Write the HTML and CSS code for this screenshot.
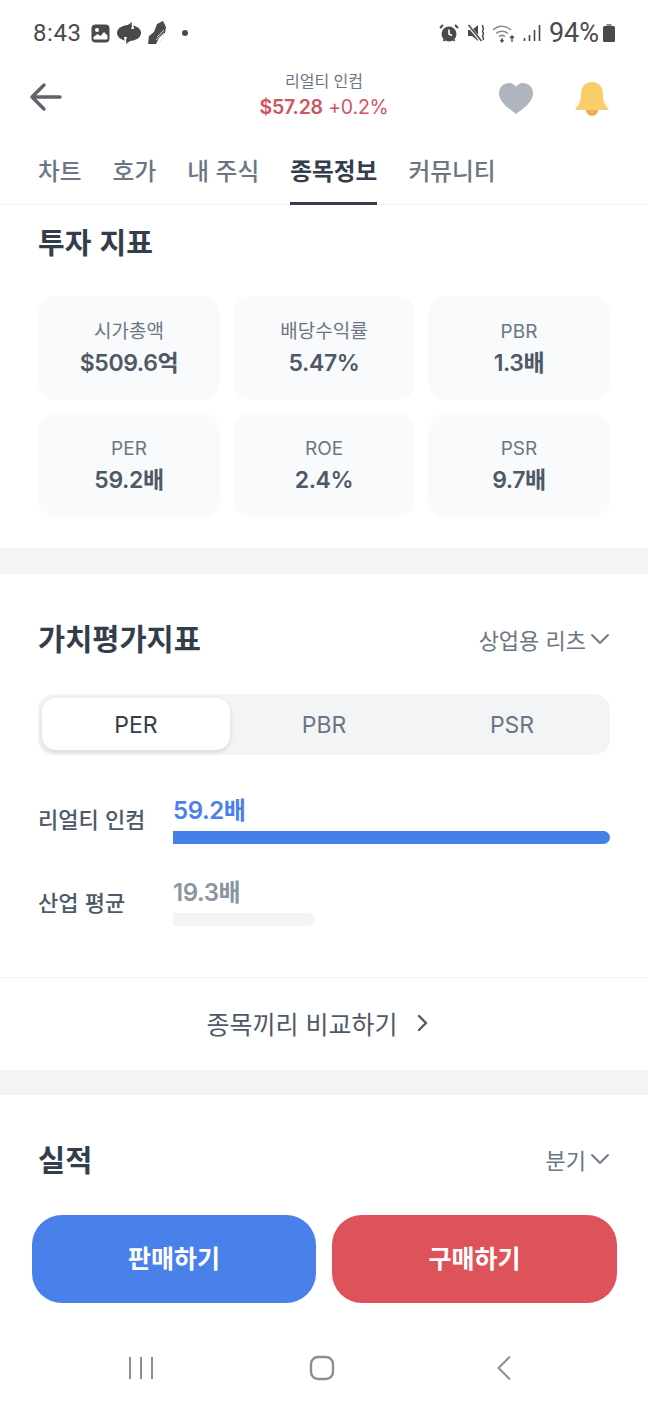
FILE: index.html
```html
<!DOCTYPE html>
<html lang="ko">
<head>
<meta charset="utf-8">
<title>리얼티 인컴</title>
<link rel="stylesheet" href="styles.css">
</head>
<body>
<div class="phone">
  <div class="status">
    <div class="status-left">
      <span class="clock">8:43</span>
      <svg class="si-a" width="19" height="19" viewBox="0 0 19 19"><rect x="0.500" y="0.500" width="18" height="18" rx="4" fill="#4a4a4a"/><circle cx="6" cy="6" r="2" fill="#fff"/><path d="M2.500 14.500V13l4-3 3 2 3.500-4 3.500 3.500v3a1 1 0 0 1-1 1h-12a1 1 0 0 1-1-1z" fill="#fff"/></svg>
      <svg class="si-b" width="24" height="22" viewBox="0 0 24 22"><ellipse cx="12" cy="11" rx="12" ry="8" fill="#4a4a4a"/><path d="M8 5l7-5-1 8z" fill="#4a4a4a"/><path d="M16 17l-7 5 1-8z" fill="#4a4a4a"/><path d="M16 1l-2 6 3 0z M8 21l2-6-3 0z" fill="#fff"/></svg>
      <svg class="si-c" width="19" height="24" viewBox="0 0 19 24"><path d="M0 23l1-8 5-4 3-8 6-3 3 6-1 6-6 5-3 6z" fill="#4a4a4a"/><path d="M8 19l8-7M9 16l7-7M12 20l4-4" stroke="#d8d8d8" stroke-width="1"/></svg>
      <span class="dot"></span>
    </div>
    <div class="status-right">
      <svg class="alarm" width="20" height="20" viewBox="0 0 20 20"><circle cx="10" cy="11" r="7.500" fill="#4a4a4a"/><path d="M10 6.500V11l3 1.500" stroke="#fff" stroke-width="1.600" fill="none"/><path d="M1 5l3-3M19 5l-3-3M4.500 18l1.500-2M15.500 18L14 16" stroke="#4a4a4a" stroke-width="2"/></svg>
      <svg class="mute" width="20" height="20" viewBox="0 0 20 20"><path d="M1 7h4l6-5v16l-6-5H1z" fill="#4a4a4a"/><path d="M1 2l13 16" stroke="#fff" stroke-width="3"/><path d="M1.500 2l13 16" stroke="#4a4a4a" stroke-width="1.500"/><path d="M16 2c-2 2 2 3 0 5s2 3 0 5 2 3 0 5" stroke="#4a4a4a" stroke-width="1.500" fill="none"/></svg>
      <svg class="wifi" width="25" height="20" viewBox="0 0 25 20"><path d="M1 7c5-5 13-5 18 0M4 10.500c3.500-3 8.500-3 12 0M7 13.500c2-1.500 4-1.500 6 0" stroke="#8a8a8a" stroke-width="1.500" fill="none"/><path d="M10 15v4M8.500 17l1.500 2 1.500-2M20 19v-6M18 15l2-2 2 2" stroke="#4a4a4a" stroke-width="1.300" fill="none"/></svg>
      <svg class="signal" width="18" height="20" viewBox="0 0 18 20"><path d="M1.500 15v3M6.500 12v6M11.500 7v11M16.500 2v16" stroke="#4a4a4a" stroke-width="1.600"/></svg>
      <span class="pct">94%</span>
      <svg class="batt" width="14" height="20" viewBox="0 0 14 20"><path d="M4.500 1h5v2h-5z" fill="#8a8a8a"/><rect x="1" y="3" width="12" height="16" rx="1.500" fill="#4a4a4a"/></svg>
    </div>
  </div>

  <header class="top">
    <svg class="back" width="36" height="36" viewBox="0 0 36 36"><path d="M32 19H5M16 7L4 19l12 12" stroke="#5f6368" stroke-width="3.400" stroke-linecap="round" stroke-linejoin="round" fill="none" transform="translate(0 -1)"/></svg>
    <div class="quote">
      <div class="name">리얼티 인컴</div>
      <div class="price"><b>$57.28</b> +0.2%</div>
    </div>
    <div class="actions">
      <svg width="36" height="34" viewBox="0 0 36 34"><path d="M18 32C10 26 1 20 1 11 1 5 6 1 11 1c3 0 5.500 1.500 7 4 1.500-2.500 4-4 7-4 5 0 10 4 10 10 0 9-9 15-17 21z" fill="#aeb5bd"/></svg>
      <svg width="36" height="36" viewBox="0 0 36 36"><path d="M18 1C11 1 7 6 7 13c0 8-2 11-5 14-1 1-1 2 1 2h30c2 0 2-1 1-2-3-3-5-6-5-14C29 6 25 1 18 1z" fill="#f9cd6a"/><path d="M12 29h12c0 3-3 6-6 6s-6-3-6-6z" fill="#f3ac50"/></svg>
    </div>
  </header>

  <nav class="tabs">
    <span class="tab">차트</span>
    <span class="tab">호가</span>
    <span class="tab">내 주식</span>
    <span class="tab active">종목정보</span>
    <span class="tab">커뮤니티</span>
  </nav>

  <section class="metrics">
    <h2 class="h-metrics">투자 지표</h2>
    <div class="grid">
      <div class="card"><span class="label">시가총액</span><strong class="val">$509.6억</strong></div>
      <div class="card"><span class="label">배당수익률</span><strong class="val">5.47%</strong></div>
      <div class="card"><span class="label">PBR</span><strong class="val">1.3배</strong></div>
      <div class="card"><span class="label">PER</span><strong class="val">59.2배</strong></div>
      <div class="card"><span class="label">ROE</span><strong class="val">2.4%</strong></div>
      <div class="card"><span class="label">PSR</span><strong class="val">9.7배</strong></div>
    </div>
  </section>

  <div class="band"></div>

  <section class="valuation">
    <div class="head">
      <h2>가치평가지표</h2>
      <span class="select">상업용 리츠<svg width="20" height="12" viewBox="0 0 20 12"><path d="M2 2l8 8 8-8" stroke="#6b7684" stroke-width="1.800" fill="none" stroke-linecap="round" stroke-linejoin="round"/></svg></span>
    </div>
    <div class="segment">
      <span class="seg on">PER</span>
      <span class="seg">PBR</span>
      <span class="seg">PSR</span>
    </div>
    <div class="row first">
      <span class="row-label">리얼티 인컴</span>
      <div class="row-body">
        <span class="row-val blue">59.2배</span>
        <div class="bar bar-main"></div>
      </div>
    </div>
    <div class="row">
      <span class="row-label">산업 평균</span>
      <div class="row-body">
        <span class="row-val grey">19.3배</span>
        <div class="bar bar-avg" style="width:142px"></div>
      </div>
    </div>
  </section>

  <div class="compare">종목끼리 비교하기<svg width="14" height="18" viewBox="0 0 14 18"><path d="M3 2l7 7-7 7" stroke="#4e5968" stroke-width="2.400" fill="none" stroke-linecap="round" stroke-linejoin="round"/></svg></div>

  <div class="band band2"></div>

  <section class="results">
    <h2>실적</h2>
    <span class="select">분기<svg width="20" height="12" viewBox="0 0 20 12"><path d="M2 2l8 8 8-8" stroke="#6b7684" stroke-width="1.800" fill="none" stroke-linecap="round" stroke-linejoin="round"/></svg></span>
  </section>

  <div class="cta">
    <button class="btn sell">판매하기</button>
    <button class="btn buy">구매하기</button>
  </div>

  <div class="sysnav">
    <svg width="26" height="24" viewBox="0 0 26 24"><path d="M2 1v22M13 1v22M24 1v22" stroke="#8e8e8e" stroke-width="2"/></svg>
    <svg class="nav-home" width="26" height="26" viewBox="0 0 26 26"><rect x="2" y="2" width="22" height="22" rx="7" stroke="#8e8e8e" stroke-width="2.400" fill="none"/></svg>
    <svg class="nav-back" width="18" height="26" viewBox="0 0 18 26"><path d="M15 1.500L3.500 13 15 24.500" stroke="#8e8e8e" stroke-width="2" fill="none"/></svg>
  </div>
</div>
</body>
</html>
```

FILE: styles.css
```css
* { box-sizing: border-box; }
html, body { margin: 0; padding: 0; background: #fff; }
body { font-family: "Noto Sans CJK KR", "Inter", "Noto Sans", sans-serif; color: #333d4b; }
.phone { width: 648px; height: 1404px; overflow: hidden; display: flex; flex-direction: column; }
h2 { margin: 0; font-weight: 700; }

.status { height: 66px; flex: none; padding: 0 32px 0 33px; display: flex; justify-content: space-between; align-items: center; color: #4a4a4a; }
.status-left, .status-right { display: flex; align-items: center; }
.clock { font: 400 24px/1 "Roboto", sans-serif; letter-spacing: 0.6px; margin-right: 10px; }
.si-a { margin-left: -1px; }
.si-b { margin-left: 7px; }
.si-c { margin-left: 7px; }
.dot { width: 6px; height: 6px; border-radius: 50%; background: #4a4a4a; margin-left: 15px; }
.mute { margin-left: 8px; }
.wifi { margin-left: 5px; }
.signal { margin-left: 6px; }
.pct { font: 400 27px/1 "Roboto", sans-serif; margin-left: 8px; }
.batt { margin-left: 3px; }

.top { height: 66px; flex: none; padding: 0 38px; display: grid; grid-template-columns: 1fr auto 1fr; align-items: center; }
.back { margin: -4px 0 0 -10px; }
.quote { text-align: center; margin-top: -8px; }
.name { font-size: 16px; line-height: 20px; color: #6b7684; margin-bottom: 3px; }
.price { font-size: 19.500px; line-height: 28px; color: #cf5460; font-family: "Inter", "Noto Sans CJK KR", sans-serif; letter-spacing: -0.2px; }
.price b { font-weight: 600; }
.actions { display: flex; align-items: center; gap: 40px; justify-content: flex-end; }

.tabs { height: 73px; flex: none; padding: 18px 38px 0; display: flex; gap: 31px; border-bottom: 1px solid #f2f4f6; }
.tab { font-size: 23.700px; line-height: 40px; color: #6b7684; height: 55px; font-weight: 500; }
.tab.active { color: #333d4b; font-weight: 700; border-bottom: 3px solid #333d4b; }

.metrics { height: 343px; flex: none; padding: 0 38px; }
.h-metrics { font-size: 29px; line-height: 40px; margin: 16px 0 35px; }
.grid { display: grid; grid-template-columns: repeat(3, 182px); grid-auto-rows: 104px; column-gap: 13px; row-gap: 13px; }
.card { background: #f9fafb; border-radius: 18px; display: flex; flex-direction: column; align-items: center; padding-top: 23px; }
.label { font: 400 19px/26px "Inter", "Noto Sans CJK KR", sans-serif; color: #6b7684; }
.val { font: 600 23px/36px "Inter", "Noto Sans CJK KR", sans-serif; letter-spacing: -0.4px; color: #4e5968; }

.band { height: 26px; flex: none; background: #f2f4f6; }
.band2 { height: 25px; }

.valuation { height: 404px; flex: none; padding: 44px 38px 0; border-bottom: 1px solid #f2f4f6; }
.head { display: flex; justify-content: space-between; align-items: center; height: 42px; }
.head h2 { margin-bottom: 4px; }
.head h2, .results h2 { font-size: 29.500px; line-height: 40px; }
.select { font-size: 22px; color: #6b7684; display: flex; align-items: center; gap: 4px; }
.segment { margin-top: 34px; height: 61px; background: #f2f4f6; border-radius: 16px; padding: 4px; display: grid; grid-template-columns: repeat(3, 1fr); }
.seg { display: flex; align-items: center; justify-content: center; font: 400 23px/1 "Inter", sans-serif; color: #6b7684; border-radius: 14px; height: 52px; padding-top: 2px; }
.seg.on { background: #fff; color: #333d4b; box-shadow: 0 2px 5px rgba(0,0,0,.12); }
.row { display: flex; align-items: center; height: 62px; margin-top: 21px; }
.row.first { margin-top: 32px; }
.row-label { width: 135px; flex: none; font-size: 22px; line-height: 30px; font-weight: 500; color: #4e5968; }
.row-body { flex: 1; display: flex; flex-direction: column; }
.row-val { font: 600 24px/32px "Inter", "Noto Sans CJK KR", sans-serif; letter-spacing: -0.4px; }
.blue { color: #4a80e8; margin-top: 2px; }
.grey { color: #8b95a1; margin-top: 1px; }
.bar { height: 13px; margin-top: 4px; border-radius: 0 7px 7px 0; }
.bar-main { background: #4580e8; }
.bar-avg { background: #f2f4f6; }

.compare { height: 92px; flex: none; display: flex; align-items: center; justify-content: center; gap: 18px; font-size: 25px; color: #4e5968; padding: 0 12px 2px 0; }

.results { height: 120px; flex: none; padding: 43px 38px 0; display: flex; justify-content: space-between; align-items: flex-start; }
.results .select { margin-top: 5px; }
.cta { flex: none; padding: 0 31px 0 32px; display: grid; grid-template-columns: 284px 285px; gap: 16px; }
.btn { height: 88px; border: 0; border-radius: 30px; color: #fff; padding: 0 0 3px; font: 600 25px/1 "Noto Sans CJK KR", sans-serif; }
.sell { background: #4a80ea; }
.buy { background: #de5359; }

.sysnav { flex: 1; padding: 28px 0 0 128px; display: flex; align-items: center; }
.nav-home { margin-left: 155px; }
.nav-back { margin-left: 160px; }
```
